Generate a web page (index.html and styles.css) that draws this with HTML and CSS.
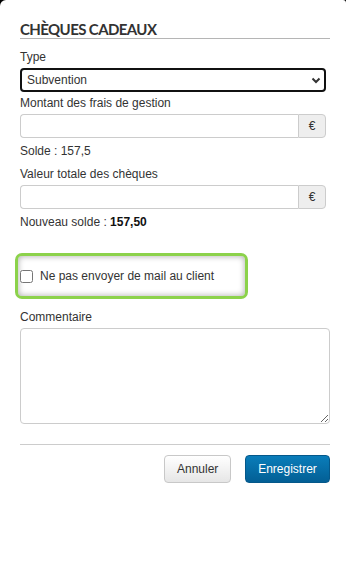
FILE: index.html
```html
<!DOCTYPE html>
<html lang="fr">
<head>
    <meta charset="UTF-8">
    <meta name="viewport" content="width=device-width, initial-scale=1.0">
    <title>Chèques cadeaux</title>
    <link rel="stylesheet" href="styles.css">
</head>
<body>

<div class="modal">
    <h3 class="modal-title">CHÈQUES CADEAUX</h3>

    <div class="form-group group-type">
        <label for="type">Type</label>
        <div class="select-wrap">
            <select id="type" class="form-select">
                <option>Subvention</option>
            </select>
            <svg class="select-arrow" width="10" height="7" viewBox="0 0 10 7">
                <path d="M1.5 1.5 L5 5 L8.5 1.5" fill="none" stroke="#333" stroke-width="2"/>
            </svg>
        </div>
    </div>

    <div class="form-group group-frais">
        <label for="frais">Montant des frais de gestion</label>
        <div class="input-group">
            <input type="text" id="frais" class="form-input">
            <span class="addon">&euro;</span>
        </div>
        <p class="help">Solde : 157,5</p>
    </div>

    <div class="form-group">
        <label for="valeur">Valeur totale des chèques</label>
        <div class="input-group">
            <input type="text" id="valeur" class="form-input">
            <span class="addon">&euro;</span>
        </div>
        <p class="help">Nouveau solde : <b>157,50</b></p>
    </div>

    <!-- highlighted option -->
    <div class="highlight">
        <label class="check">
            <input type="checkbox">
            <span>Ne pas envoyer de mail au client</span>
        </label>
    </div>

    <div class="form-group group-comment">
        <label for="comment">Commentaire</label>
        <textarea id="comment" class="form-textarea"></textarea>
    </div>

    <div class="modal-footer">
        <button class="btn btn-default">Annuler</button>
        <button class="btn btn-primary">Enregistrer</button>
    </div>
</div>

</body>
</html>
```

FILE: styles.css
```css
html {
    background-color: #000;
}
body {
    font-family: Arial, "Liberation Sans", sans-serif;
    font-size: 12px;
    color: #333;
    margin: 0;
    padding: 0;
}
.modal {
    background-color: #fff;
    min-height: 100vh;
    box-sizing: border-box;
    border-radius: 6px 3px 0 0;
    padding: 20px 16px 20px 20px;
}
.modal-title {
    font-family: Lato, "Open Sans", sans-serif;
    font-size: 15px;
    font-weight: bold;
    letter-spacing: -0.6px;
    line-height: 18px;
    color: #333;
    margin: 0 0 11px 0;
    border-bottom: 1px solid #b5b5b5;
}
.form-group label {
    display: block;
    line-height: 15px;
    margin-bottom: 3px;
}
.group-type {
    margin-bottom: 4px;
}
.group-frais {
    margin-bottom: 8px;
}
.select-wrap {
    position: relative;
    width: 306px;
}
.form-select {
    -webkit-appearance: none;
    appearance: none;
    display: block;
    width: 100%;
    height: 24px;
    box-sizing: border-box;
    border: 2px solid #111;
    border-radius: 4px;
    background: #fff;
    font-family: Arial, "Liberation Sans", sans-serif;
    font-size: 12px;
    color: #333;
    padding: 0 5px;
    outline: none;
}
.select-arrow {
    position: absolute;
    right: 5px;
    top: 9px;
}
.input-group {
    display: flex;
    width: 306px;
    height: 24px;
}
.form-input {
    flex: 1;
    min-width: 0;
    box-sizing: border-box;
    border: 1px solid #ccc;
    border-right: none;
    border-radius: 4px 0 0 4px;
    margin: 0;
    padding: 0 6px;
    outline: none;
}
.addon {
    width: 28px;
    box-sizing: border-box;
    border: 1px solid #ccc;
    border-radius: 0 4px 4px 0;
    background-color: #eee;
    display: flex;
    align-items: center;
    justify-content: center;
    font-size: 12px;
}
.help {
    margin: 6px 0 0 0;
    line-height: 15px;
}
.help b {
    color: #111;
}
.highlight {
    width: 233px;
    height: 46px;
    box-sizing: border-box;
    margin: 23px 0 0 -5px;
    border: 3px solid #8cd24b;
    border-radius: 7px;
    box-shadow: inset 0 0 6px rgba(0, 0, 0, 0.35);
    display: flex;
    align-items: center;
    padding-left: 2px;
}
.check {
    display: flex;
    align-items: center;
    line-height: 15px;
}
.check input {
    width: 13px;
    height: 13px;
    margin: 1px 7px 0 0;
}
.group-comment {
    margin-top: 11px;
}
.form-textarea {
    display: block;
    width: 310px;
    height: 96px;
    box-sizing: border-box;
    border: 1px solid #ccc;
    border-radius: 4px;
    margin: 0;
    resize: vertical;
}
.modal-footer {
    margin-top: 20px;
    border-top: 1px solid #ccc;
    padding-top: 10px;
    display: flex;
    justify-content: flex-end;
    gap: 14px;
}
.btn {
    height: 28px;
    font-family: Arial, "Liberation Sans", sans-serif;
    font-size: 12px;
    border-radius: 4px;
    cursor: pointer;
    padding: 0 12px;
}
.btn-default {
    width: 67px;
    color: #333;
    background: linear-gradient(#fff, #e6e6e6);
    border: 1px solid #c8c8c8;
}
.btn-primary {
    width: 85px;
    color: #fff;
    background: linear-gradient(#0a7dba, #035f95);
    border: 1px solid #05588a;
}
```
